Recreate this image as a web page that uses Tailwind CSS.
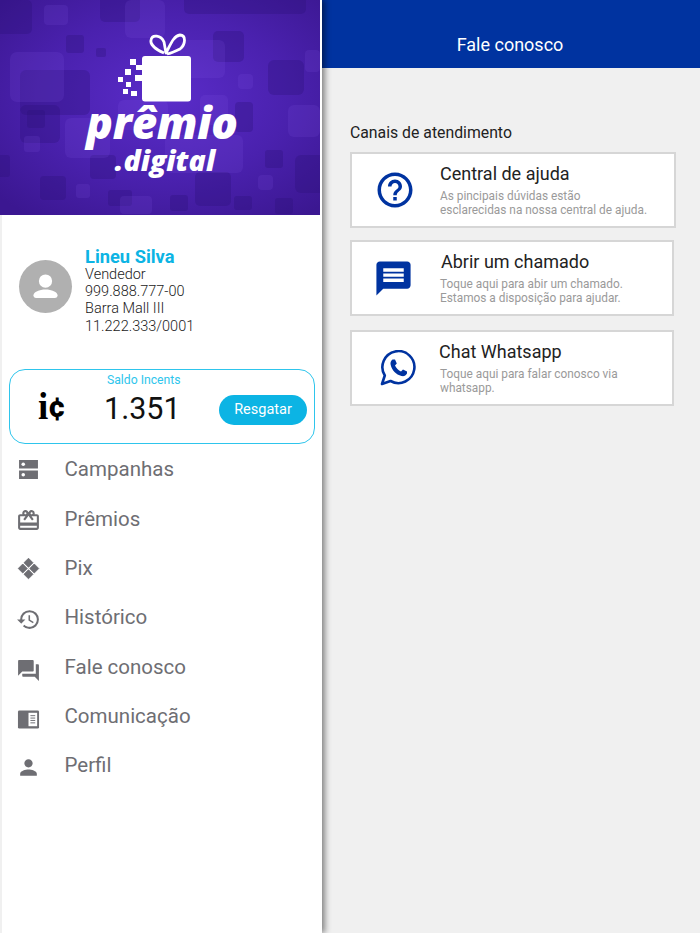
<!DOCTYPE html>
<html lang="pt-BR">

<head>
  <meta charset="UTF-8">
  <meta name="viewport" content="width=device-width, initial-scale=1.0">
  <title>Fale conosco</title>
  <script src="https://cdn.jsdelivr.net/npm/@tailwindcss/browser@4"></script>
</head>

<body class="bg-[#f0f0f0] font-['Roboto',sans-serif]">
  <div class="flex h-[933px] w-[700px] overflow-hidden">

    <!-- Menu lateral -->
    <aside class="relative z-10 w-[322px] shrink-0 bg-white shadow-[3px_0_6px_rgba(0,0,0,0.45)]">
      <div class="absolute bottom-0 left-0 top-[215px] w-[2px] bg-[#f0f0f0]"></div>

      <!-- Banner -->
      <div class="relative h-[215px] w-[320px] overflow-hidden bg-[#4a1fa8]">
        <svg class="absolute inset-0" width="320" height="215" viewBox="0 0 320 215">
          <defs>
            <radialGradient id="glow" cx="52%" cy="45%" r="70%">
              <stop offset="0" stop-color="#5a2cc9" />
              <stop offset="0.55" stop-color="#4a21ae" />
              <stop offset="1" stop-color="#3b1791" />
            </radialGradient>
          </defs>
          <rect width="320" height="215" fill="url(#glow)" />
          <g fill="#2a0f78" fill-opacity="0.3">
            <rect x="-4" y="0" width="36" height="34" rx="5" />
            <rect x="100" y="-6" width="40" height="28" rx="5" />
            <rect x="184" y="-4" width="122" height="18" rx="5" />
            <rect x="213" y="31" width="31" height="31" rx="5" />
            <rect x="268" y="60" width="36" height="35" rx="6" />
            <rect x="20" y="70" width="70" height="45" rx="6" />
            <rect x="20" y="105" width="40" height="38" rx="6" />
            <rect x="27" y="110" width="18" height="18" rx="3" />
            <rect x="66" y="35" width="18" height="18" rx="3" />
            <rect x="96" y="48" width="10" height="9" rx="2" />
            <rect x="265" y="150" width="18" height="18" rx="3" />
            <rect x="295" y="155" width="30" height="38" rx="6" />
            <rect x="195" y="172" width="36" height="34" rx="5" />
            <rect x="40" y="176" width="26" height="24" rx="4" />
            <rect x="90" y="155" width="26" height="24" rx="4" />
            <rect x="-4" y="155" width="14" height="22" rx="3" />
            <rect x="234" y="196" width="18" height="14" rx="3" />
            <rect x="275" y="198" width="18" height="16" rx="3" />
            <rect x="108" y="190" width="24" height="16" rx="3" />
            <rect x="170" y="195" width="18" height="16" rx="3" />
            <rect x="235" y="102" width="18" height="30" rx="4" />
          </g>
          <g fill="#8a5ce8" fill-opacity="0.14">
            <rect x="44" y="5" width="24" height="20" rx="4" />
            <rect x="125" y="0" width="40" height="38" rx="6" />
            <rect x="10" y="52" width="54" height="50" rx="7" />
            <rect x="180" y="40" width="45" height="38" rx="6" />
            <rect x="238" y="74" width="15" height="15" rx="4" />
            <rect x="288" y="105" width="32" height="32" rx="6" />
            <rect x="65" y="118" width="45" height="40" rx="6" />
            <rect x="165" y="135" width="78" height="38" rx="6" />
            <rect x="258" y="175" width="15" height="15" rx="4" />
            <rect x="76" y="184" width="14" height="14" rx="3" />
            <rect x="24" y="136" width="16" height="16" rx="3" />
            <rect x="120" y="196" width="32" height="18" rx="4" />
            <rect x="305" y="50" width="15" height="22" rx="4" />
            <rect x="118" y="100" width="50" height="30" rx="6" />
            <rect x="200" y="95" width="28" height="30" rx="5" />
          </g>
          <!-- Laço e caixa do presente -->
          <path d="M164 53 C157 50 150 45 151 40 C152 34 161 35 164 42 L166 53 C170 46 173 36 180 35 C186 35 186 44 180 49 C176 51 172 53 167 54" fill="none" stroke="#fff" stroke-width="2.800" stroke-linejoin="round" />
          <rect x="142" y="56" width="49" height="45.500" rx="3" fill="#fff" />
          <g fill="#fff">
            <rect x="130" y="59" width="6" height="6" />
            <rect x="136" y="65" width="6" height="5" />
            <rect x="125" y="69" width="6" height="6" />
            <rect x="135" y="75" width="7" height="6" />
            <rect x="118" y="77" width="5" height="5" />
            <rect x="126" y="82" width="5" height="5" />
            <rect x="123" y="89" width="5" height="5" />
            <rect x="131" y="91" width="6" height="5" />
          </g>
        </svg>
        <div class="absolute left-0 top-[99px] w-[320px] pl-[4px] text-center font-['Open_Sans',sans-serif] text-[44px] leading-[46px] font-extrabold italic tracking-[-0.3px] text-white">prêmio</div>
        <div class="absolute left-0 top-[145px] w-[330px] text-center font-['Open_Sans',sans-serif] text-[28.500px] leading-[30px] font-extrabold italic text-white">.digital</div>
      </div>

      <!-- Usuário -->
      <div class="flex items-start gap-[13px] pl-[19px] pt-[33px]">
        <div class="mt-[12px] flex h-[53px] w-[53px] items-center justify-center rounded-full bg-[#b0b0b0]">
          <svg width="29" height="29" viewBox="0 0 24 24" fill="#fff">
            <circle cx="12" cy="7.500" r="5.500" />
            <path d="M2 19.500 C2 16.500 7 14.500 12 14.500 C17 14.500 22 16.500 22 19.500 Q22 21.500 20 21.500 H4 Q2 21.500 2 19.500 Z" />
          </svg>
        </div>
        <div class="text-[14.500px] leading-[17.400px] font-light text-[#222]">
          <div class="pt-[1px] text-[18.300px] leading-[16.500px] font-bold text-[#0cb4e4]">Lineu Silva</div>
          <div>Vendedor</div>
          <div>999.888.777-00</div>
          <div>Barra Mall III</div>
          <div>11.222.333/0001</div>
        </div>
      </div>

      <!-- Saldo -->
      <div class="relative ml-[9px] mt-[34px] flex h-[75px] w-[306px] items-center rounded-[16px] border border-[#2ec5ec]">
        <span class="absolute left-[97px] top-[2px] text-[12.200px] leading-[16px] text-[#2ec5ec]">Saldo Incents</span>
        <span class="ml-[28px] flex w-[30px] items-center whitespace-nowrap text-black">
          <span class="font-['Liberation_Serif',serif] text-[37px] leading-none font-bold">i</span>
          <span class="text-[30px] leading-none font-black">¢</span>
        </span>
        <span class="ml-[36px] mt-[5px] text-[30.500px] leading-none text-[#111]">1.351</span>
        <button class="ml-auto mr-[7px] mt-[7px] h-[30px] w-[88px] rounded-full bg-[#0cb4e4] text-[14.500px] text-white">Resgatar</button>
      </div>

      <!-- Navegação -->
      <nav class="mt-[1px] text-[20.500px] text-[#6e6e73]">
        <a class="flex h-[49.330px] items-center pl-[18px]">
          <svg class="h-[21px] w-[21px] shrink-0" viewBox="0 0 20 20" fill="#6e6e73">
            <path d="M1 1 H19 V9 H1 Z M1 11 H19 V19 H1 Z" />
            <circle cx="5" cy="5" r="1.700" fill="#fff" />
            <circle cx="5" cy="15" r="1.700" fill="#fff" />
          </svg>
          <span class="ml-[25.500px]">Campanhas</span>
        </a>
        <a class="flex h-[49.330px] items-center pl-[16px]">
          <svg class="mt-[2px] h-[25px] w-[25px] shrink-0" viewBox="0 0 24 24" fill="#6e6e73">
            <path d="M20 6h-2.180c.11-.31.18-.65.18-1a2.996 2.996 0 0 0-5.500-1.650l-.5.670-.5-.680C10.960 2.540 10.050 2 9 2 7.340 2 6 3.340 6 5c0 .350.070.690.180 1H4c-1.110 0-1.990.890-1.990 2L2 19c0 1.110.890 2 2 2h16c1.110 0 2-.890 2-2V8c0-1.110-.890-2-2-2zm-5-2c.550 0 1 .450 1 1s-.450 1-1 1-1-.450-1-1 .450-1 1-1zM9 4c.550 0 1 .450 1 1s-.450 1-1 1-1-.450-1-1 .450-1 1-1zm11 15H4v-2h16v2zm0-5H4V8h5.080L7 10.830 8.620 12 11 8.760l1-1.360 1 1.360L15.380 12 17 10.830 14.920 8H20v6z" />
          </svg>
          <span class="ml-[23.500px]">Prêmios</span>
        </a>
        <a class="flex h-[49.330px] items-center pl-[17px]">
          <svg class="h-[23px] w-[23px] shrink-0" viewBox="0 0 24 24" fill="#6e6e73">
            <path d="M12 1.300 L16.700 6 L12 10.700 L7.300 6 Z M6 7.300 L10.700 12 L6 16.700 L1.300 12 Z M18 7.300 L22.700 12 L18 16.700 L13.300 12 Z M12 13.300 L16.700 18 L12 22.700 L7.300 18 Z" stroke="#6e6e73" stroke-width="0.900" stroke-linejoin="round" />
          </svg>
          <span class="ml-[24.500px]">Pix</span>
        </a>
        <a class="flex h-[49.330px] items-center pl-[16px]">
          <svg class="mt-[4px] h-[25px] w-[25px] shrink-0" viewBox="0 0 24 24" fill="#6e6e73">
            <path d="M13 3a9 9 0 0 0-9 9H1l3.890 3.890.070.140L9 12H6c0-3.870 3.130-7 7-7s7 3.130 7 7-3.130 7-7 7c-1.930 0-3.680-.790-4.940-2.060l-1.420 1.420A8.954 8.954 0 0 0 13 21a9 9 0 0 0 0-18zm-1 5v5l4.280 2.540.720-1.210-3.500-2.080V8H12z" />
          </svg>
          <span class="ml-[23.500px]">Histórico</span>
        </a>
        <a class="flex h-[49.330px] items-center pl-[16px]">
          <svg class="mt-[6px] h-[25px] w-[25px] shrink-0" viewBox="0 0 24 24" fill="#6e6e73">
            <path d="M21 6h-2v9H6v2c0 .550.450 1 1 1h11l4 4V7c0-.550-.450-1-1-1zm-4 6V3c0-.550-.450-1-1-1H3c-.550 0-1 .450-1 1v14l4-4h10c.550 0 1-.450 1-1z" />
          </svg>
          <span class="ml-[23.500px]">Fale conosco</span>
        </a>
        <a class="flex h-[49.330px] items-center pl-[17px]">
          <svg class="mt-[6px] h-[23px] w-[23px] shrink-0" viewBox="0 0 24 24">
            <rect x="1" y="2.500" width="22" height="19" rx="1.500" fill="#6e6e73" />
            <rect x="12" y="5" width="9" height="14" fill="#fff" />
            <path d="M14 8h5M14 10.500h5M14 13h5M14 15.500h5" stroke="#6e6e73" stroke-width="1" />
          </svg>
          <span class="ml-[24.500px]">Comunicação</span>
        </a>
        <a class="flex h-[49.330px] items-center pl-[16px]">
          <svg class="mt-[4px] h-[25px] w-[25px] shrink-0" viewBox="0 0 24 24" fill="#6e6e73">
            <path d="M12 12c2.210 0 4-1.790 4-4s-1.790-4-4-4-4 1.790-4 4 1.790 4 4 4zm0 2c-2.670 0-8 1.340-8 4v2h16v-2c0-2.660-5.330-4-8-4z" />
          </svg>
          <span class="ml-[23.500px]">Perfil</span>
        </a>
      </nav>
    </aside>

    <!-- Conteúdo -->
    <main class="min-w-0 flex-1">
      <header class="flex h-[68px] items-center justify-center bg-[#0033a0] pt-[20px] text-[18px] text-white">
        <span class="-ml-[2px]">Fale conosco</span>
      </header>
      <section class="pl-[28px] pt-[55px]">
        <h2 class="text-[15.800px] leading-[19px] text-[#222]">Canais de atendimento</h2>

        <a class="mt-[10px] flex h-[76px] w-[326px] border-2 border-[#d6d6d6] bg-white">
          <div class="flex w-[88px] shrink-0 items-center justify-center">
            <svg class="mr-[2px]" width="42" height="42" viewBox="0 0 24 24" fill="#0033a0">
              <path d="M11 18h2v-2h-2v2zm1-16C6.480 2 2 6.480 2 12s4.480 10 10 10 10-4.480 10-10S17.520 2 12 2zm0 18c-4.410 0-8-3.590-8-8s3.590-8 8-8 8 3.590 8 8-3.590 8-8 8zm0-14c-2.210 0-4 1.790-4 4h2c0-1.100.900-2 2-2s2 .900 2 2c0 2-3 1.750-3 5h2c0-2.250 3-2.500 3-5 0-2.210-1.790-4-4-4z" />
            </svg>
          </div>
          <div class="pt-[9px]">
            <div class="text-[18px] leading-[22px] text-[#222]">Central de ajuda</div>
            <p class="mt-[4px] text-[11.850px] leading-[14px] text-[#9a9a9a]">As pincipais dúvidas estão<br>esclarecidas na nossa central de ajuda.</p>
          </div>
        </a>

        <a class="mt-[12px] flex h-[76px] w-[324px] border-2 border-[#d6d6d6] bg-white">
          <div class="flex w-[88px] shrink-0 items-center justify-center">
            <svg class="mr-[6px] mt-[1px]" width="41" height="41" viewBox="0 0 24 24" fill="#0033a0">
              <path d="M20 2H4c-1.100 0-2 .900-2 2v18l4-4h14c1.100 0 2-.900 2-2V4c0-1.100-.900-2-2-2zM6 9h12v2H6V9zm12 5H6v-2h12v2zm0-6H6V6h12v2z" />
            </svg>
          </div>
          <div class="pl-[1px] pt-[9px]">
            <div class="text-[18px] leading-[22px] text-[#222]">Abrir um chamado</div>
            <p class="-ml-[1px] mt-[4px] text-[11.850px] leading-[14px] text-[#9a9a9a]">Toque aqui para abir um chamado.<br>Estamos a disposição para ajudar.</p>
          </div>
        </a>

        <a class="mt-[14px] flex h-[76px] w-[324px] border-2 border-[#d6d6d6] bg-white">
          <div class="flex w-[88px] shrink-0 items-center justify-center">
            <svg class="ml-[4px]" width="36" height="36" viewBox="0 0 36 36">
              <path d="M2 34 L4.800 25.500 A16 16 0 1 1 10.500 31 Z" fill="none" stroke="#0033a0" stroke-width="2.600" stroke-linejoin="round" />
              <path d="M12.500 9.500 C11 10.500 10 12.500 10.700 15 C12 20.500 16 24.500 21.500 26 C24 26.500 26 25.500 27 23.500 L27 21.500 L23 19.500 L21 21.500 C18.500 20.500 16 18 15 15.500 L16.800 13.500 L15 9.500 Z" fill="#0033a0" />
            </svg>
          </div>
          <div class="pt-[9px]">
            <div class="-ml-[1px] text-[18px] leading-[22px] text-[#222]">Chat Whatsapp</div>
            <p class="mt-[4px] text-[11.850px] leading-[14px] text-[#9a9a9a]">Toque aqui para falar conosco via<br>whatsapp.</p>
          </div>
        </a>
      </section>
    </main>
  </div>
</body>

</html>
